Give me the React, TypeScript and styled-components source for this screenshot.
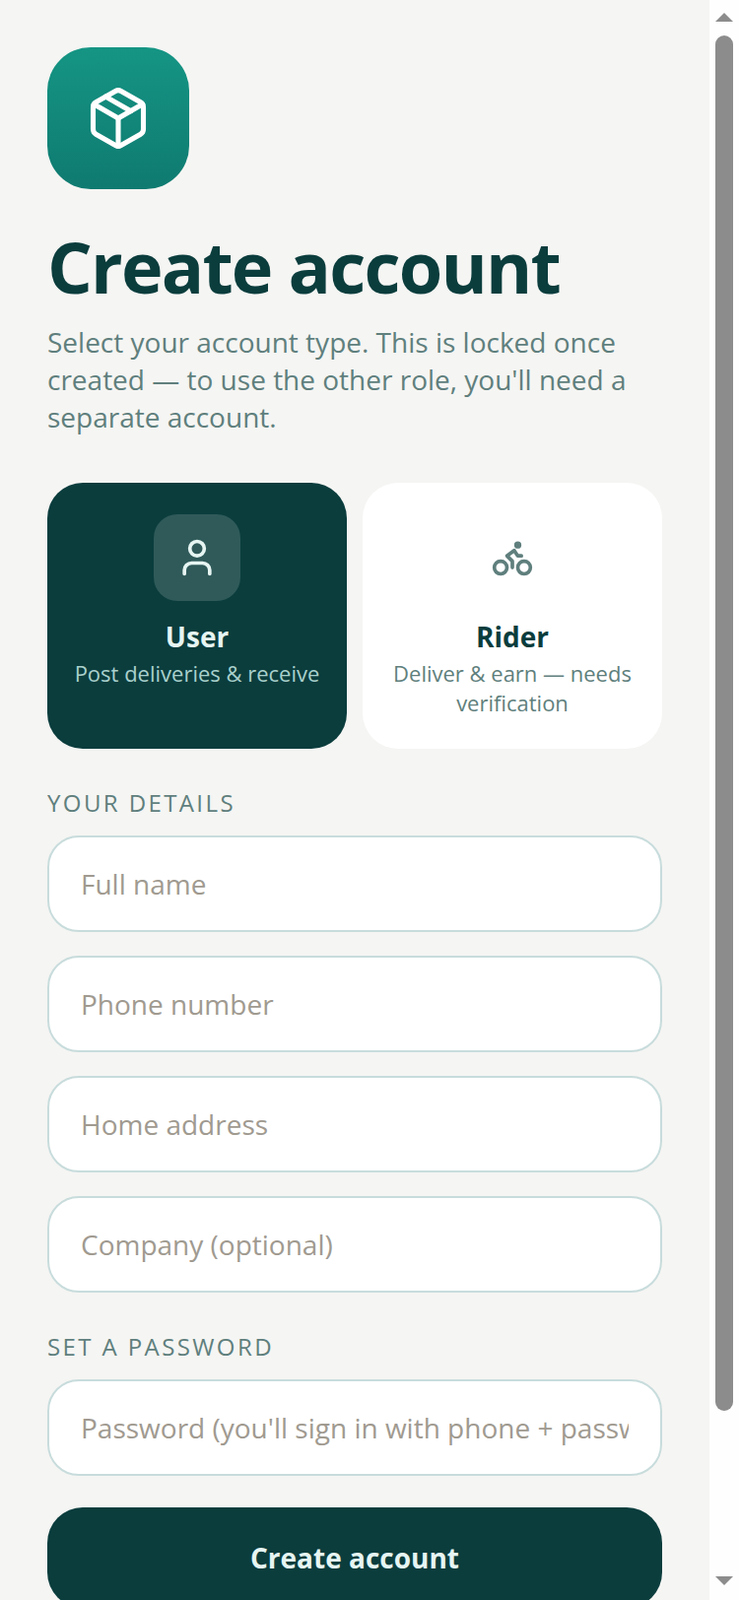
import React from 'react'
import styled, { createGlobalStyle } from 'styled-components'
import { Bike, Package, User } from 'lucide-react'

const GlobalStyle = createGlobalStyle`
	html,
	body {
		margin: 0;
		height: 100%;
		overflow: hidden;
		background: #f5f5f3;
	}
	* {
		box-sizing: border-box;
	}
`

const Page = styled.div`
	display: flex;
	width: 750px;
	height: 1624px;
	overflow: hidden;
	font-family: 'Open Sans', sans-serif;
`

const Main = styled.main`
	flex: 1;
	min-width: 0;
	padding: 48px 48px 0;
	background: #f5f5f3;
`

const Logo = styled.div`
	display: flex;
	align-items: center;
	justify-content: center;
	width: 144px;
	height: 144px;
	border-radius: 44px;
	color: #fff;
	background: linear-gradient(180deg, #159584 0%, #0f7a70 100%);
`

const Title = styled.h1`
	margin: 32px 0 12px;
	font-size: 72px;
	line-height: 92px;
	font-weight: 700;
	letter-spacing: -0.025em;
	color: #0b3d3d;
`

const Subtitle = styled.p`
	margin: 0 0 48px;
	font-size: 28px;
	line-height: 38px;
	color: #5f7f7d;
`

const Roles = styled.div`
	display: grid;
	grid-template-columns: 1fr 1fr;
	gap: 16px;
	margin-bottom: 39px;
`

const RoleCard = styled.div<{ $active?: boolean }>`
	display: flex;
	flex-direction: column;
	align-items: center;
	height: 270px;
	padding: 32px 20px 0;
	border-radius: 36px;
	text-align: center;
	background: ${(props) => (props.$active ? '#0b3d3d' : '#fff')};
`

const RoleIcon = styled.div<{ $active?: boolean }>`
	display: flex;
	align-items: center;
	justify-content: center;
	width: 88px;
	height: 88px;
	border-radius: 24px;
	color: ${(props) => (props.$active ? '#e6f5f2' : '#5f7f7d')};
	background: ${(props) => (props.$active ? '#305a5a' : 'transparent')};
`

const RoleName = styled.div<{ $active?: boolean }>`
	margin-top: 17px;
	font-size: 28px;
	line-height: 38px;
	font-weight: 700;
	color: ${(props) => (props.$active ? '#e6f5f2' : '#0b3d3d')};
`

const RoleText = styled.div<{ $active?: boolean }>`
	margin-top: 3px;
	font-size: 22px;
	line-height: 30px;
	color: ${(props) => (props.$active ? '#a9d0cc' : '#5f7f7d')};
`

const SectionLabel = styled.div`
	margin-bottom: 17px;
	font-size: 24px;
	line-height: 32px;
	letter-spacing: 2.4px;
	color: #5f7f7d;
`

const Fields = styled.div<{ $gapAfter: number }>`
	display: flex;
	flex-direction: column;
	gap: 24px;
	margin-bottom: ${(props) => props.$gapAfter}px;
`

const Input = styled.input`
	display: block;
	width: 100%;
	height: 98px;
	padding: 0 32px;
	border: 2px solid #c8dcdc;
	border-radius: 32px;
	outline: none;
	font-family: inherit;
	font-size: 28px;
	color: #0b3d3d;
	background: #fff;
	&::placeholder {
		color: #a09a90;
		opacity: 1;
	}
`

const Submit = styled.button`
	display: block;
	width: 100%;
	height: 102px;
	border: 0;
	border-radius: 36px;
	font-family: inherit;
	font-size: 28px;
	font-weight: 700;
	color: #e6f5f2;
	background: #0b3d3d;
`

const ScrollRail = styled.div`
	display: flex;
	flex-direction: column;
	align-items: center;
	flex: 0 0 30px;
	background: #fefefe;
`

const Arrow = styled.div<{ $down?: boolean }>`
	width: 0;
	height: 0;
	border-left: 9px solid transparent;
	border-right: 9px solid transparent;
	${(props) => (props.$down ? 'border-top: 9px solid #8c8c8c;' : 'border-bottom: 9px solid #8c8c8c;')}
	margin-top: ${(props) => (props.$down ? 'auto' : '13px')};
	margin-bottom: ${(props) => (props.$down ? '15px' : '0')};
`

const Thumb = styled.div`
	width: 18px;
	height: 1396px;
	margin-top: 14px;
	border-radius: 9px;
	background: #8c8c8c;
`

export default function App() {
	return (
		<Page>
			<GlobalStyle />
			<Main>
				<Logo>
					<Package size={68} strokeWidth={1.8} />
				</Logo>
				<Title>Create account</Title>
				<Subtitle>Select your account type. This is locked once created — to use the other role, you'll need a separate account.</Subtitle>
				<Roles>
					<RoleCard $active>
						<RoleIcon $active>
							<User size={44} />
						</RoleIcon>
						<RoleName $active>User</RoleName>
						<RoleText $active>Post deliveries &amp; receive</RoleText>
					</RoleCard>
					<RoleCard>
						<RoleIcon>
							<Bike size={44} />
						</RoleIcon>
						<RoleName>Rider</RoleName>
						<RoleText>Deliver &amp; earn — needs verification</RoleText>
					</RoleCard>
				</Roles>
				<SectionLabel>YOUR DETAILS</SectionLabel>
				<Fields $gapAfter={39}>
					<Input placeholder="Full name" />
					<Input placeholder="Phone number" />
					<Input placeholder="Home address" />
					<Input placeholder="Company (optional)" />
				</Fields>
				<SectionLabel>SET A PASSWORD</SectionLabel>
				<Fields $gapAfter={32}>
					<Input placeholder="Password (you'll sign in with phone + password)" />
				</Fields>
				<Submit>Create account</Submit>
			</Main>
			<ScrollRail>
				<Arrow />
				<Thumb />
				<Arrow $down />
			</ScrollRail>
		</Page>
	)
}
